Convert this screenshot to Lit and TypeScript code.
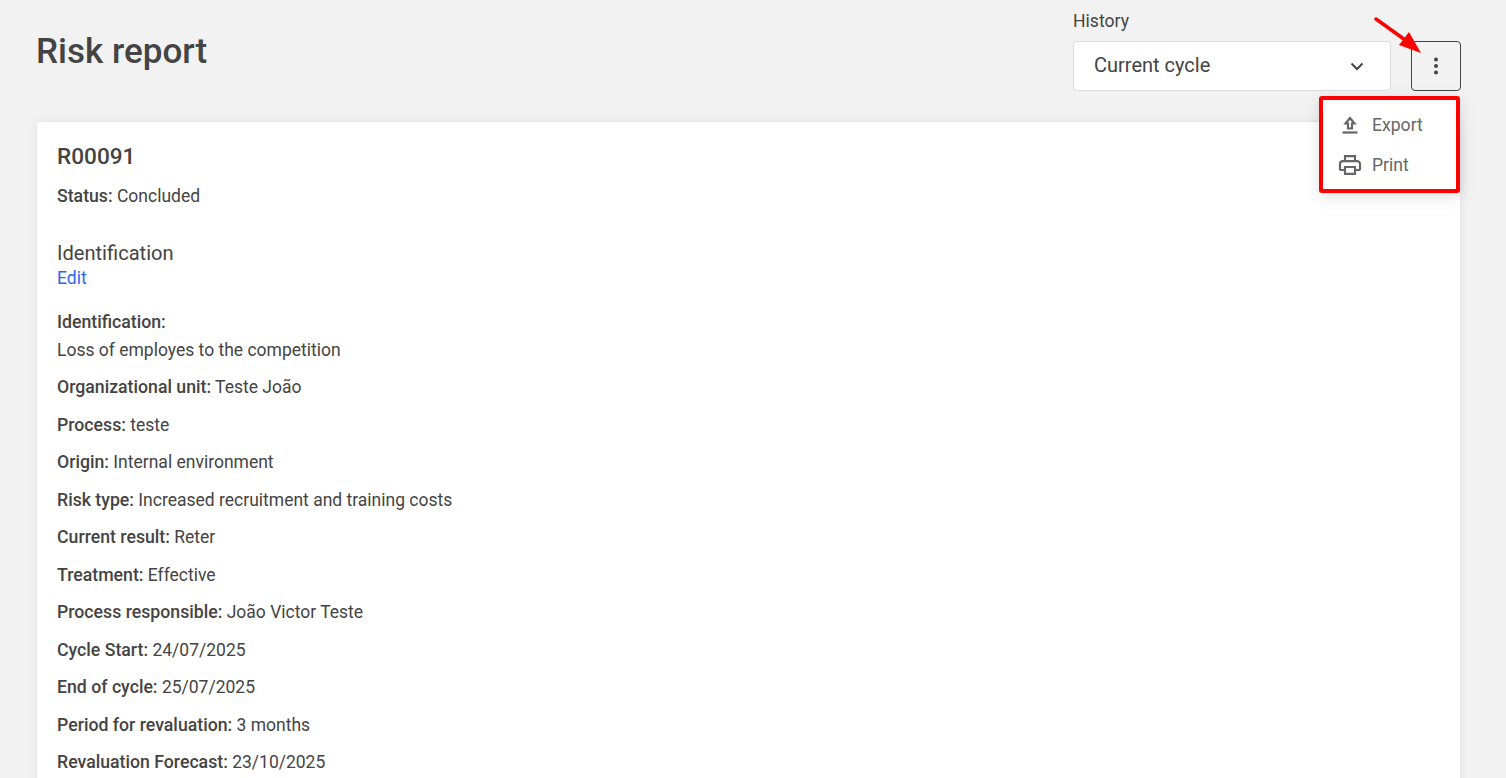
import { LitElement, html, css } from "lit";
import { customElement } from "lit/decorators.js";

const rows: [string, string][] = [
  ["Organizational unit:", "Teste João"],
  ["Process:", "teste"],
  ["Origin:", "Internal environment"],
  ["Risk type:", "Increased recruitment and training costs"],
  ["Current result:", "Reter"],
  ["Treatment:", "Effective"],
  ["Process responsible:", "João Victor Teste"],
  ["Cycle Start:", "24/07/2025"],
  ["End of cycle:", "25/07/2025"],
  ["Period for revaluation:", "3 months"],
  ["Revaluation Forecast:", "23/10/2025"],
];

@customElement("app-root")
export class AppRoot extends LitElement {
  static styles = css`
    :host {
      display: block;
      position: relative;
      width: 1506px;
      height: 778px;
      overflow: hidden;
      background: #f2f2f2;
      color: #444;
      font-family: Roboto, "Liberation Sans", sans-serif;
      font-size: 17.5px;
      line-height: 20px;
    }
    .page { padding: 0 46px 0 37px; }
    .header { display: flex; justify-content: space-between; align-items: flex-start; height: 122px; }
    h1 { margin: 33px 0 0 -1px; font-size: 35px; line-height: 38px; font-weight: 500; color: #444; }
    .tools { display: flex; align-items: flex-end; gap: 20px; margin: 11px -1px 0 0; }
    .label { font-size: 17.6px; line-height: 20px; margin-bottom: 10px; }
    .select {
      box-sizing: border-box; width: 318px; height: 50px; display: flex; align-items: center;
      justify-content: space-between; padding: 0 26px 0 20px; background: #fff;
      border: 1px solid #dcdcdc; border-radius: 4px; font-size: 20px;
    }
    .select span { margin-top: -3px; }
    .more {
      box-sizing: border-box; width: 50px; height: 50px; border: 1px solid #444; border-radius: 4px;
      display: flex; align-items: center; justify-content: center;
    }
    .card {
      background: #fff; border-radius: 4px; padding: 21px 20px 0; height: 700px;
      box-shadow: 0 0 8px rgba(0,0,0,.08);
    }
    h2 { margin: 0; font-size: 22.6px; line-height: 28px; font-weight: 500; }
    .status { margin-top: 15px; }
    b { font-weight: 500; font-size: 17.7px; }
    h3 { margin: 35px 0 0; font-size: 20.1px; line-height: 24px; font-weight: 400; }
    .edit { display: block; color: #2a6ae8; line-height: 20px; margin-top: 3px; }
    .ident { margin-top: 20px; }
    .ident div { height: 28px; line-height: 28px; }
    .row { margin-top: 17.5px; }
    .ident + .row { margin-top: 13px; }
    .menu {
      position: absolute; left: 1319px; top: 96px; width: 141px; height: 97px; box-sizing: border-box;
      background: #fff; border: 4px solid #f00; border-radius: 3px;
      box-shadow: 0 4px 16px rgba(0,0,0,.12); color: #666; padding: 5px 0 0 15px;
    }
    .item { display: flex; align-items: center; gap: 10px; height: 40px; font-size: 17.6px; }
    .arrow { position: absolute; left: 1370px; top: 12px; }
  `;

  render() {
    return html`
      <div class="page">
        <div class="header">
          <h1>Risk report</h1>
          <div class="tools">
            <div>
              <div class="label">History</div>
              <div class="select">
                <span>Current cycle</span>
                <svg width="14" height="9" viewBox="0 0 14 9"><path d="M1.5 1.5 7 7l5.5-5.5" fill="none" stroke="#444" stroke-width="2"/></svg>
              </div>
            </div>
            <div class="more">
              <svg width="6" height="18" viewBox="0 0 6 18" fill="#444"><circle cx="3" cy="2.5" r="2"/><circle cx="3" cy="9" r="2"/><circle cx="3" cy="15.5" r="2"/></svg>
            </div>
          </div>
        </div>
        <div class="card">
          <h2>R00091</h2>
          <div class="status"><b>Status:</b> Concluded</div>
          <h3>Identification</h3>
          <a class="edit">Edit</a>
          <div class="ident"><div><b>Identification:</b></div><div>Loss of employes to the competition</div></div>
          ${rows.map(([k, v]) => html`<div class="row"><b>${k}</b> ${v}</div>`)}
        </div>
      </div>
      <div class="menu">
        <div class="item">
          <svg width="24" height="24" viewBox="0 0 24 24" fill="none" stroke="#666" stroke-width="2.200"><path d="M12 5 7.500 10.500H10V15.500h4v-5h2.500z"/><path d="M4.500 19.500h15"/></svg>
          Export
        </div>
        <div class="item">
          <svg width="24" height="24" viewBox="0 0 24 24" fill="none" stroke="#666" stroke-width="2.200"><path d="M7 17H3.500a1.500 1.500 0 0 1-1.500-1.500V11A2.800 2.800 0 0 1 4.800 8.200h14.400A2.800 2.800 0 0 1 22 11v4.500a1.500 1.500 0 0 1-1.500 1.500H17"/><path d="M7 8V3.200h10V8"/><path d="M7 14h10v6.800H7z"/></svg>
          Print
        </div>
      </div>
      <svg class="arrow" width="60" height="50" viewBox="0 0 60 50">
        <path d="M6 7 38 30" stroke="#f00" stroke-width="3.500" stroke-linecap="round"/>
        <path d="M51 41 29 33 39 20z" fill="#f00"/>
      </svg>
    `;
  }
}
